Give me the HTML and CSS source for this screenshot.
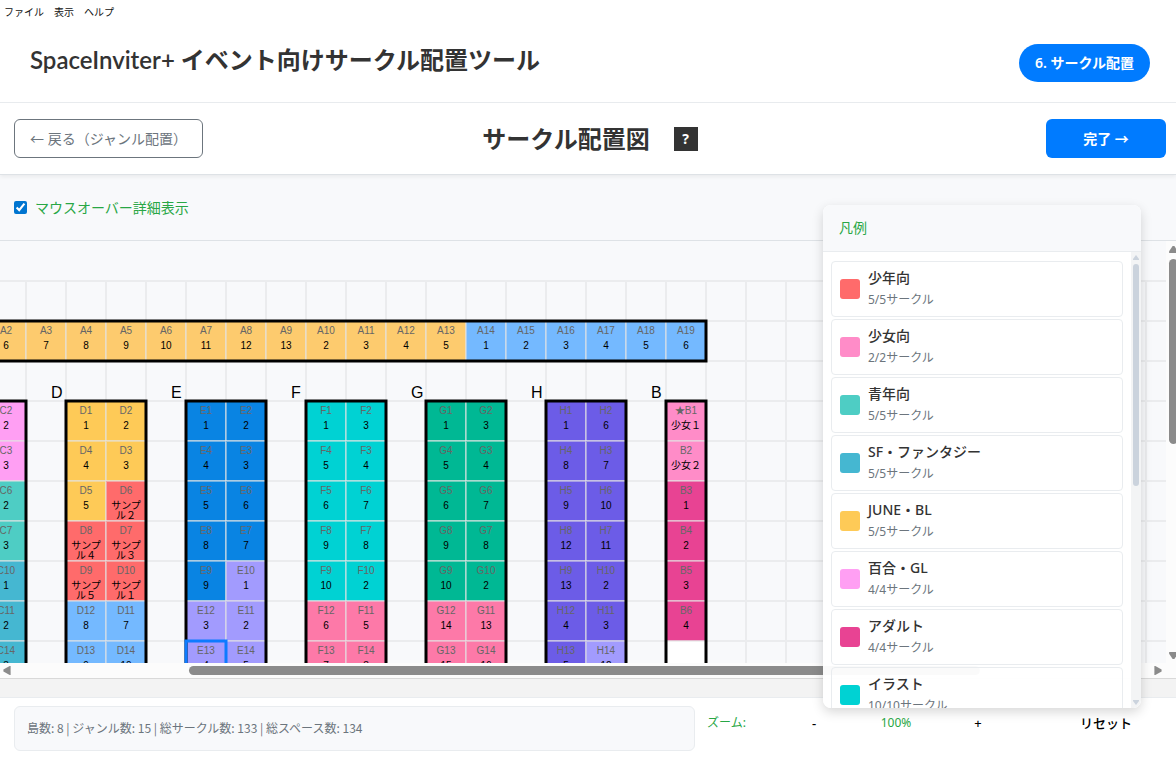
FILE: index.html
```
<!DOCTYPE html>
<html lang="ja">
<head>
  <meta charset="UTF-8">
  <meta name="viewport" content="width=device-width, initial-scale=1.0">
  <title>SpaceInviter+</title>
  <link rel="stylesheet" href="styles.css">
</head>
<body>
  <nav class="menu">
    <a href="#">ファイル</a>
    <a href="#">表示</a>
    <a href="#">ヘルプ</a>
  </nav>

  <header class="header">
    <h1>SpaceInviter+ イベント向けサークル配置ツール</h1>
    <div class="step">6. サークル配置</div>
  </header>

  <div class="toolbar">
    <button class="btn back" type="button">← 戻る（ジャンル配置）</button>
    <div class="title">
      <h2>サークル配置図</h2>
      <button class="help" type="button">?</button>
    </div>
    <button class="btn next" type="button">完了 →</button>
  </div>

  <div class="options">
    <input type="checkbox" id="hover-detail" checked>
    <label for="hover-detail">マウスオーバー詳細表示</label>
  </div>

  <main class="map">
    <div class="map-row">
      <svg class="canvas" id="canvas"></svg>
      <div class="scroll-y">
        <svg class="arrow" viewBox="0 0 10 8"><path d="M4 0h2l4 6v2H0V6z"/></svg>
        <div class="thumb"></div>
        <svg class="arrow down" viewBox="0 0 10 8"><path d="M0 0h10v2L6 8H4L0 2z"/></svg>
      </div>
    </div>
    <div class="scroll-x">
      <svg class="arrow" viewBox="0 0 8 10"><path d="M8 0v10H7L0 6V4L7 0z"/></svg>
      <div class="track"><div class="thumb"></div></div>
      <svg class="arrow" viewBox="0 0 8 10"><path d="M0 0v10h1l7-4V4L1 0z"/></svg>
    </div>

    <aside class="legend">
      <div class="legend-header">凡例</div>
      <div class="legend-body">
        <ul class="legend-list" id="legend"></ul>
        <div class="legend-scroll">
          <svg class="arrow" viewBox="0 0 6 5"><path d="M3 0l3 4v1H0V4z"/></svg>
          <div class="thumb"></div>
          <svg class="arrow down" viewBox="0 0 6 5"><path d="M0 0h6v1L3 5 0 1z"/></svg>
        </div>
      </div>
    </aside>
  </main>

  <footer class="footer">
    <div class="stats">島数: 8 | ジャンル数: 15 | 総サークル数: 133 | 総スペース数: 134</div>
    <div class="zoom">
      <span class="green">ズーム:</span>
      <button type="button">-</button>
      <span class="green value">100%</span>
      <button type="button">+</button>
      <button class="reset" type="button">リセット</button>
    </div>
  </footer>

  <script src="script.js"></script>
</body>
</html>
```
FILE: styles.css
```
* {
  margin: 0;
  padding: 0;
  box-sizing: border-box;
}

body {
  min-height: 100vh;
  display: flex;
  flex-direction: column;
  background-color: #fff;
  color: #333;
  font-family: "Noto Sans", "Noto Sans CJK JP", sans-serif;
  font-size: 14px;
  line-height: 20px;
  overflow: hidden;
}

button {
  font: inherit;
  border: none;
  background: none;
  cursor: pointer;
}

.menu {
  display: flex;
  gap: 10px;
  height: 24px;
  padding: 0 4px;
  align-items: center;
  font-size: 10px;

  & > a {
    color: #111;
    text-decoration: none;
  }
}

.header {
  display: flex;
  align-items: center;
  justify-content: space-between;
  height: 79px;
  padding: 0 26px 0 30px;
  border-bottom: 1px solid #e9ecef;

  & > h1 {
    margin-bottom: 6px;
    font-family: Lato, "Noto Sans CJK JP", sans-serif;
    font-size: 24px;
    line-height: 36px;
    font-weight: 600;
  }

  & > .step {
    padding: 9px 16px;
    border-radius: 20px;
    background-color: #007bff;
    color: #fff;
    font-weight: 600;
  }
}

.toolbar {
  display: grid;
  grid-template-columns: 1fr auto 1fr;
  align-items: center;
  height: 72px;
  padding: 0 10px 0 14px;
  border-bottom: 1px solid #dee2e6;
  box-shadow: 0 2px 4px rgba(0, 0, 0, 0.06);
  z-index: 1;

  & .btn {
    height: 39px;
    padding: 0 15px;
    border-radius: 6px;
  }

  & > .back {
    justify-self: start;
    border: 1px solid #6c757d;
    color: #6c757d;
  }

  & > .next {
    justify-self: end;
    min-width: 120px;
    background-color: #007bff;
    color: #fff;
    font-weight: 600;
  }

  & > .title {
    display: flex;
    align-items: center;
    gap: 24px;
  }

  & h2 {
    font-size: 24px;
    line-height: 36px;
    font-weight: 600;
  }

  & .help {
    width: 24px;
    height: 24px;
    background-color: #333;
    color: #fff;
    font-weight: 700;
  }
}

.options {
  display: flex;
  align-items: center;
  gap: 8px;
  height: 66px;
  padding: 0 14px;
  background-color: #f8f9fb;
  border-bottom: 1px solid #dee2e6;
  color: #28a745;

  & > input {
    width: 13px;
    height: 13px;
    accent-color: #0075d0;
  }
}

.green {
  color: #28a745;
}

.map {
  position: relative;
  flex: 1;
  display: flex;
  flex-direction: column;
  background-color: #f3f3f3;
  padding-bottom: 18px;
}

.map-row {
  flex: 1;
  display: flex;
  align-items: stretch;
  background-color: #f8f9fb;
}

.canvas {
  flex: 1;
  min-width: 0;
  overflow: hidden;
  font-family: "Liberation Sans", "Noto Sans CJK JP", sans-serif;
  font-size: 10px;
  text-anchor: middle;

  & .grid {
    stroke: #ebecee;
    stroke-width: 2;
  }

  & .cell {
    stroke: #e4e4e4;
    stroke-width: 2;
    stroke-opacity: 0.5;
  }

  & .id {
    fill: #666;
  }

  & .border {
    fill: none;
    stroke: #000;
    stroke-width: 3;
  }

  & .selected {
    fill: none;
    stroke: #0d7bff;
    stroke-width: 3;
  }

  & .name {
    font-size: 16px;
    text-anchor: start;
  }
}

.arrow {
  display: block;
  fill: #8b8b8b;
}

.scroll-y {
  display: flex;
  flex-direction: column;
  width: 10px;
  padding: 5px 0 4px 3px;
  background-color: #fcfcfc;
  overflow: hidden;

  & > .arrow {
    width: 9px;
    height: 7px;
  }

  & > .down {
    margin-top: auto;
  }

  & > .thumb {
    width: 9px;
    height: 185px;
    margin-top: 6px;
    border-radius: 5px;
    background-color: #8b8b8b;
  }
}

.scroll-x {
  display: flex;
  align-items: center;
  height: 16px;
  padding: 0 14px 0 3px;
  background-color: #fcfcfc;
  border-bottom: 1px solid #d9d9d9;

  & > .arrow {
    width: 8px;
    height: 9px;
  }

  & > .track {
    flex: 1;
    padding: 0 15% 0 178px;
  }

  & .thumb {
    height: 9px;
    border-radius: 5px;
    background-color: #8b8b8b;
  }
}

.legend {
  position: absolute;
  top: -36px;
  right: 35px;
  bottom: -11px;
  width: 318px;
  z-index: 2;
  display: flex;
  flex-direction: column;
  border-radius: 8px;
  background-color: rgba(255, 255, 255, 0.96);
  box-shadow: 0 4px 12px rgba(0, 0, 0, 0.16);
  overflow: hidden;

  & > .legend-header {
    padding: 13px 16px;
    background-color: #f8f9fb;
    border-bottom: 1px solid #e9ecef;
    color: #28a745;
  }

  & > .legend-body {
    flex: 1;
    display: flex;
    min-height: 0;
  }
}

.legend-list {
  flex: 1;
  display: flex;
  flex-direction: column;
  gap: 2px;
  padding: 9px 8px 0;
  list-style: none;
  overflow: hidden;

  & > li {
    flex: none;
    display: flex;
    align-items: center;
    gap: 8px;
    height: 56px;
    padding: 0 8px;
    border: 1px solid #e9ecef;
    border-radius: 4px;
  }

  & .swatch {
    width: 20px;
    height: 20px;
    border-radius: 3px;
    background-color: var(--color);
  }

  & .label {
    font-weight: 500;
  }

  & .count {
    margin-top: 2px;
    font-size: 12px;
    color: #6c757d;
  }
}

.legend-scroll {
  display: flex;
  flex-direction: column;
  align-items: center;
  width: 10px;
  padding: 3px 0;
  background-color: #f3f4f5;

  & > .arrow {
    width: 6px;
    height: 5px;
    fill: #cbd3dd;
  }

  & > .down {
    margin-top: auto;
  }

  & > .thumb {
    width: 6px;
    height: 222px;
    margin-top: 4px;
    border-radius: 3px;
    background-color: #cbd3dd;
  }
}

.footer {
  display: grid;
  grid-template-columns: 681fr 459fr;
  gap: 12px;
  padding: 8px 10px 6px 14px;
  border-top: 1px solid #e9ecef;
  font-size: 12px;

  & > .stats {
    padding: 11px 12px 12px;
    border: 1px solid #e9ecef;
    border-radius: 6px;
    background-color: #f8f9fb;
    color: #6c757d;
    font-family: "Noto Sans CJK JP", sans-serif;
  }

  & > .zoom {
    display: grid;
    grid-template-columns: 66px repeat(3, 82px) 1fr;
    align-items: center;
    height: 34px;

    & > button {
      font-size: 13px;
      font-weight: 500;
      color: #000;
    }

    & > .value {
      text-align: center;
    }

    & > .reset {
      justify-self: end;
      margin-right: 34px;
    }
  }
}
```
FILE: script.js
```
const CELL = 40;

const C = {
  amber: '#fdcb6e', sky: '#74b9ff', yellow: '#feca57', red: '#ff6b6b',
  orchid: '#ff9ff3', teal: '#4ecdc4', cyan: '#45b7d1', blue: '#0984e3',
  lilac: '#a29bfe', aqua: '#00d2d3', pink: '#fd79a8', green: '#00b894',
  purple: '#6c5ce7', rose: '#ff8cc8', magenta: '#e84393', white: '#ffffff',
};

// cells: [space id, circle, colour], filled row by row
const islands = [
  { name: '', x: -14, y: 80, cols: 18, cells: [
    ['A2', '6', C.amber], ['A3', '7', C.amber], ['A4', '8', C.amber],
    ['A5', '9', C.amber], ['A6', '10', C.amber], ['A7', '11', C.amber], ['A8', '12', C.amber],
    ['A9', '13', C.amber], ['A10', '2', C.amber], ['A11', '3', C.amber], ['A12', '4', C.amber],
    ['A13', '5', C.amber], ['A14', '1', C.sky], ['A15', '2', C.sky], ['A16', '3', C.sky],
    ['A17', '4', C.sky], ['A18', '5', C.sky], ['A19', '6', C.sky],
  ] },
  { name: '', x: -14, y: 160, cols: 1, cells: [
    ['C2', '2', C.orchid], ['C3', '3', C.orchid], ['C6', '2', C.teal], ['C7', '3', C.teal],
    ['C10', '1', C.cyan], ['C11', '2', C.cyan], ['C14', '3', C.cyan],
  ] },
  { name: 'D', x: 66, y: 160, cols: 2, cells: [
    ['D1', '1', C.yellow], ['D2', '2', C.yellow], ['D4', '4', C.yellow], ['D3', '3', C.yellow],
    ['D5', '5', C.yellow], ['D6', 'サンプル２', C.red], ['D8', 'サンプル４', C.red], ['D7', 'サンプル３', C.red],
    ['D9', 'サンプル５', C.red], ['D10', 'サンプル１', C.red], ['D12', '8', C.sky], ['D11', '7', C.sky],
    ['D13', '9', C.sky], ['D14', '10', C.sky],
  ] },
  { name: 'E', x: 186, y: 160, cols: 2, cells: [
    ['E1', '1', C.blue], ['E2', '2', C.blue], ['E4', '4', C.blue], ['E3', '3', C.blue],
    ['E5', '5', C.blue], ['E6', '6', C.blue], ['E8', '8', C.blue], ['E7', '7', C.blue],
    ['E9', '9', C.blue], ['E10', '1', C.lilac], ['E12', '3', C.lilac], ['E11', '2', C.lilac],
    ['E13', '4', C.lilac, true], ['E14', '5', C.lilac],
  ] },
  { name: 'F', x: 306, y: 160, cols: 2, cells: [
    ['F1', '1', C.aqua], ['F2', '3', C.aqua], ['F4', '5', C.aqua], ['F3', '4', C.aqua],
    ['F5', '6', C.aqua], ['F6', '7', C.aqua], ['F8', '9', C.aqua], ['F7', '8', C.aqua],
    ['F9', '10', C.aqua], ['F10', '2', C.aqua], ['F12', '6', C.pink], ['F11', '5', C.pink],
    ['F13', '7', C.pink], ['F14', '8', C.pink],
  ] },
  { name: 'G', x: 426, y: 160, cols: 2, cells: [
    ['G1', '1', C.green], ['G2', '3', C.green], ['G4', '5', C.green], ['G3', '4', C.green],
    ['G5', '6', C.green], ['G6', '7', C.green], ['G8', '9', C.green], ['G7', '8', C.green],
    ['G9', '10', C.green], ['G10', '2', C.green], ['G12', '14', C.pink], ['G11', '13', C.pink],
    ['G13', '15', C.pink], ['G14', '16', C.pink],
  ] },
  { name: 'H', x: 546, y: 160, cols: 2, cells: [
    ['H1', '1', C.purple], ['H2', '6', C.purple], ['H4', '8', C.purple], ['H3', '7', C.purple],
    ['H5', '9', C.purple], ['H6', '10', C.purple], ['H8', '12', C.purple], ['H7', '11', C.purple],
    ['H9', '13', C.purple], ['H10', '2', C.purple], ['H12', '4', C.purple], ['H11', '3', C.purple],
    ['H13', '5', C.purple], ['H14', '12', C.lilac],
  ] },
  { name: 'B', x: 666, y: 160, cols: 1, cells: [
    ['★B1', '少女１', C.rose], ['B2', '少女２', C.rose], ['B3', '1', C.magenta], ['B4', '2', C.magenta],
    ['B5', '3', C.magenta], ['B6', '4', C.magenta], ['', '', C.white],
  ] },
];

const genres = [
  ['少年向', '5/5', C.red],
  ['少女向', '2/2', C.rose],
  ['青年向', '5/5', C.teal],
  ['SF・ファンタジー', '5/5', C.cyan],
  ['JUNE・BL', '5/5', C.yellow],
  ['百合・GL', '4/4', C.orchid],
  ['アダルト', '4/4', C.magenta],
  ['イラスト', '10/10', C.aqua],
];

function drawGrid() {
  let out = '';
  for (let y = CELL; y <= 1200; y += CELL) {
    out += `<line class="grid" x1="0" x2="100%" y1="${y}" y2="${y}"/>`;
  }
  for (let x = 26; x <= 2400; x += CELL) {
    out += `<line class="grid" x1="${x}" x2="${x}" y1="${CELL}" y2="1200"/>`;
  }
  return out;
}

function drawIsland({ name, x, y, cols, cells }) {
  let out = '';
  let selected = '';
  cells.forEach(([id, circle, color, isSelected], i) => {
    const cx = x + (i % cols) * CELL;
    const cy = y + Math.floor(i / cols) * CELL;
    const mid = cx + CELL / 2;
    out += `<rect class="cell" x="${cx}" y="${cy}" width="${CELL}" height="${CELL}" fill="${color}"/>`;
    out += `<text class="id" x="${mid}" y="${cy + 13}">${id}</text>`;
    // names wrap after three characters
    circle.match(/.{1,3}/g)?.forEach((line, n) => {
      out += `<text x="${mid}" y="${cy + 28 + n * 10}">${line}</text>`;
    });
    if (isSelected) {
      selected = `<rect class="selected" x="${cx}" y="${cy}" width="${CELL}" height="${CELL}"/>`;
    }
  });
  const rows = Math.ceil(cells.length / cols);
  // vertical islands go on below the visible part
  const height = rows === 1 ? CELL : (rows + 1) * CELL;
  // islands that start left of the view have no left edge
  const left = x < 0 ? x - CELL : x;
  out += `<rect class="border" x="${left}" y="${y}" width="${x + cols * CELL - left}" height="${height}"/>`;
  out += `<text class="name" x="${x - 15}" y="${y - 3}">${name}</text>`;
  return out + selected;
}

document.getElementById('canvas').innerHTML = drawGrid() + islands.map(drawIsland).join('');

document.getElementById('legend').innerHTML = genres.map(([name, count, color]) => `
  <li>
    <span class="swatch" style="--color: ${color}"></span>
    <div>
      <div class="label">${name}</div>
      <div class="count">${count}サークル</div>
    </div>
  </li>`).join('');
```
